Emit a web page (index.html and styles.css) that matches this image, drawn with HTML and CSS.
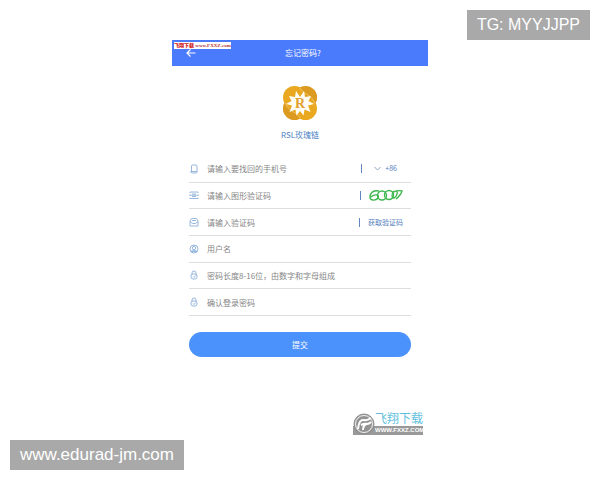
FILE: index.html
```html
<!DOCTYPE html>
<html lang="zh-CN">
<head>
  <meta charset="UTF-8">
  <meta name="viewport" content="width=device-width, initial-scale=1.0">
  <title>忘记密码?</title>
  <link rel="stylesheet" href="styles.css">
</head>
<body>
  <div class="tag tag-top">TG: MYYJJPP</div>

  <main class="screen">
    <header class="header">
      <a class="back" href="#" aria-label="返回">
        <svg width="10" height="8" viewBox="0 0 10 8" fill="none" stroke="#fff" stroke-width="1.2"><path d="M9.5 4H1M4.5 .5L1 4l3.500 3.500"/></svg>
      </a>
      <h1>忘记密码?</h1>
      <span class="site-mark"><b>飞翔下载</b> www.FXXZ.com</span>
    </header>

    <div class="brand">
      <svg width="36" height="36" viewBox="0 0 36 36">
        <g fill="#dc9a20">
          <circle cx="23.500" cy="12.500" r="11.500"/>
          <circle cx="12.500" cy="23.500" r="11.500"/>
        </g>
        <g fill="#e9a820">
          <circle cx="12.500" cy="12.500" r="11.500"/>
          <circle cx="23.500" cy="23.500" r="11.500"/>
        </g>
        <path fill="#dc9a20" d="M18 3q5-2 9-1 7 3 8 9 0 4-2 7-3-6-7-8t-8-7zM18 33q-5 2-9 1-7-3-8-9 0-4 2-7 3 6 7 8t8 7z"/>
        <path fill="none" stroke="#f6d07c" stroke-width=".7" d="M18 3q3 5 8 7M33 18q-2-5-7-8M18 33q-3-5-8-7M3 18q2 5 7 8"/>
        <path fill="#fffdf4" d="M18 12l4-6 1 6 6-1-2.500 5 5.500 3-6 1.500 2.500 6.500-6-2.500-1 6-3.500-4.500-3.500 4.500-1-6-6 2.500 2.500-6.500-6-1.500 5.500-3-2.500-5 6 1 1-6z"/>
        <text class="brand-letter" x="18" y="23" text-anchor="middle">R</text>
      </svg>
      <p>RSL玫瑰链</p>
    </div>

    <form class="form">
      <div class="fields">
        <div class="row">
          <svg class="icon" viewBox="0 0 10 10"><rect x="2.500" y="1" width="5.500" height="8" rx="1"/><path d="M2.500 7.500H8M1.500 8.500V7.500"/></svg>
          <input type="tel" aria-label="手机号" placeholder="请输入要找回的手机号">
          <button type="button" class="side code">
            <svg width="7" height="5" viewBox="0 0 7 5" fill="none" stroke="#8ca5bf"><path d="M.5 1l3 3 3-3"/></svg>
            +86
          </button>
        </div>
        <div class="row">
          <svg class="icon" viewBox="0 0 10 10"><path d="M1 3V2h8v1M1 7.500v1h8v-1M0 5.200h10M3 4h4M3 6.500h4"/></svg>
          <input type="text" aria-label="图形验证码" placeholder="请输入图形验证码">
          <button type="button" class="side captcha" aria-label="刷新图形验证码">
            <svg width="34" height="14" viewBox="0 0 34 14" fill="none" stroke="#3fb84f" stroke-width="1.400"><path d="M10 3C4 2 1 5 1 9c0 4 6 4 8 1 2-4-4-4-7-1"/><ellipse cx="13" cy="7.500" rx="4.500" ry="4.500"/><ellipse cx="20" cy="7" rx="4.500" ry="4.500"/><path d="M25 3c-3 3-2 8 0 7s4-4 3-7M24 4q6-2 9-1-1 4-6 8"/></svg>
          </button>
        </div>
        <div class="row">
          <svg class="icon" viewBox="0 0 10 10"><path d="M1 4l1.500-2.500h5L9 4v5H1zM1 4.500l2.500 2h3l2.500-2M3 3.500h4"/></svg>
          <input type="text" aria-label="验证码" placeholder="请输入验证码">
          <button type="button" class="side send">获取验证码</button>
        </div>
        <div class="row">
          <svg class="icon" viewBox="0 0 10 10"><circle cx="5" cy="5" r="4"/><circle cx="5" cy="4" r="1.700"/><path d="M2 7.500q3-3 6 0M2 7.500h6"/></svg>
          <input type="text" aria-label="用户名" placeholder="用户名">
        </div>
        <div class="row">
          <svg class="icon" viewBox="0 0 10 10"><path d="M3 4.500V3a2 2 0 0 1 4 0v1.500"/><rect x="2" y="4" width="6" height="5" rx="2"/><path d="M4 6.500l1 1 1.500-2"/></svg>
          <input type="password" aria-label="密码" placeholder="密码长度8-16位，由数字和字母组成">
        </div>
        <div class="row">
          <svg class="icon" viewBox="0 0 10 10"><path d="M3 4.500V3a2 2 0 0 1 4 0v1.500"/><rect x="2" y="4" width="6" height="5" rx="2"/><path d="M4 6.500l1 1 1.500-2"/></svg>
          <input type="password" aria-label="确认密码" placeholder="确认登录密码">
        </div>
      </div>
      <button type="submit" class="submit">提交</button>
    </form>

    <div class="download">
      <svg width="22" height="22" viewBox="0 0 22 22">
        <circle cx="11" cy="11" r="10" fill="#a2a2a2" stroke="#8b8b8b"/>
        <circle cx="11" cy="11" r="8.500" fill="#929292" stroke="#eee"/>
        <path fill="none" stroke="#fff" stroke-width="2" d="M5 16q1-10 6-9 3 1 7-2M8 12q4-2 6-1 2 0 4-2M10 17q0-5 4-6"/>
      </svg>
      <div class="download-text">
        <strong>飞翔下载</strong>
        <span>WWW.FXXZ.COM</span>
      </div>
    </div>
  </main>

  <div class="tag tag-bottom">www.edurad-jm.com</div>
</body>
</html>
```
FILE: styles.css
```css
* { box-sizing: border-box; }
body {
  margin: 0;
  padding-top: 40px;
  min-height: 100vh;
  background-color: white;
  font-family: "Liberation Sans", "Noto Sans CJK SC", sans-serif;
}
h1, p { margin: 0; font-weight: normal; }
button {
  border: 0;
  padding: 0;
  background: none;
  font-family: inherit;
  cursor: pointer;
}

/* corner labels */
.tag {
  position: fixed;
  padding: 0 10px;
  background-color: #a9a9a9;
  color: white;
  font-size: 17px;
  line-height: 30px;
}
.tag-top { top: 10px; right: 10px; font-size: 16px; }
.tag-bottom { bottom: 10px; left: 10px; }

.screen {
  width: 100%;
  max-width: 256px;
  margin: 0 auto;
  font-family: "Noto Sans CJK SC", sans-serif;
  font-size: 8px;
  line-height: 12px;
}

.header {
  position: relative;
  display: grid;
  grid-template-columns: 36px 1fr 30px;
  align-items: center;
  height: 26px;
  background-color: #4b7bfd;
  color: white;
}
.header h1 { grid-column: 2; font-size: 8px; text-align: center; }
.back { display: flex; padding-left: 14px; }
.site-mark {
  position: absolute;
  top: 2px;
  left: 2px;
  background-color: white;
  color: #b5383c;
  font-family: "Liberation Serif", "Noto Sans CJK SC", serif;
  font-size: 5px;
  font-weight: bold;
  line-height: 7px;
  white-space: nowrap;
}
.site-mark b { color: #d02020; }

.brand {
  display: flex;
  flex-direction: column;
  align-items: center;
  gap: 8px;
  padding-top: 19px;
  color: #4d7fc4;
}
.brand-letter {
  fill: #dfa02c;
  font-family: "Liberation Serif", serif;
  font-size: 14px;
  font-weight: bold;
}

.form { padding: 15px 17px 0; }
.fields {
  display: grid;
  grid-auto-rows: 1fr;
  height: 160px;
}
.row {
  display: flex;
  align-items: center;
  border-bottom: 1px solid #dedede;
}
.icon {
  flex: none;
  width: 10px;
  height: 10px;
  fill: none;
  stroke: #7fa6d4;
  stroke-width: .8;
}
.row input {
  flex: 1;
  min-width: 0;
  border: 0;
  outline: 0;
  padding: 0 0 0 8px;
  background: none;
  font-family: inherit;
  font-size: 8px;
}
.row input::placeholder { color: #858585; opacity: 1; }
.side {
  display: flex;
  align-items: center;
  color: #5580c0;
  font-size: 7px;
  line-height: 9px;
}
.side::before {
  content: "";
  width: 1px;
  height: 9px;
  margin-right: 8px;
  background-color: #6286bd;
}
.code { gap: 4px; padding-right: 14px; }
.captcha, .send { padding-right: 8px; }

.submit {
  width: 100%;
  height: 25px;
  margin-top: 16px;
  border-radius: 13px;
  background-color: #4b92fc;
  color: white;
  font-size: 8px;
}

.download {
  display: flex;
  align-items: center;
  width: 70px;
  margin: 56px 5px 0 auto;
  background: linear-gradient(transparent 60%, #999 60%);
}
.download svg { flex: none; }
.download-text {
  flex: 1;
  font-family: "Liberation Sans", "Noto Sans CJK SC", sans-serif;
  white-space: nowrap;
}
.download strong {
  display: block;
  color: #62bfdc;
  font-size: 12px;
  font-weight: normal;
  line-height: 13px;
}
.download span {
  display: block;
  color: white;
  font-size: 6px;
  font-weight: bold;
  line-height: 9px;
}
```
